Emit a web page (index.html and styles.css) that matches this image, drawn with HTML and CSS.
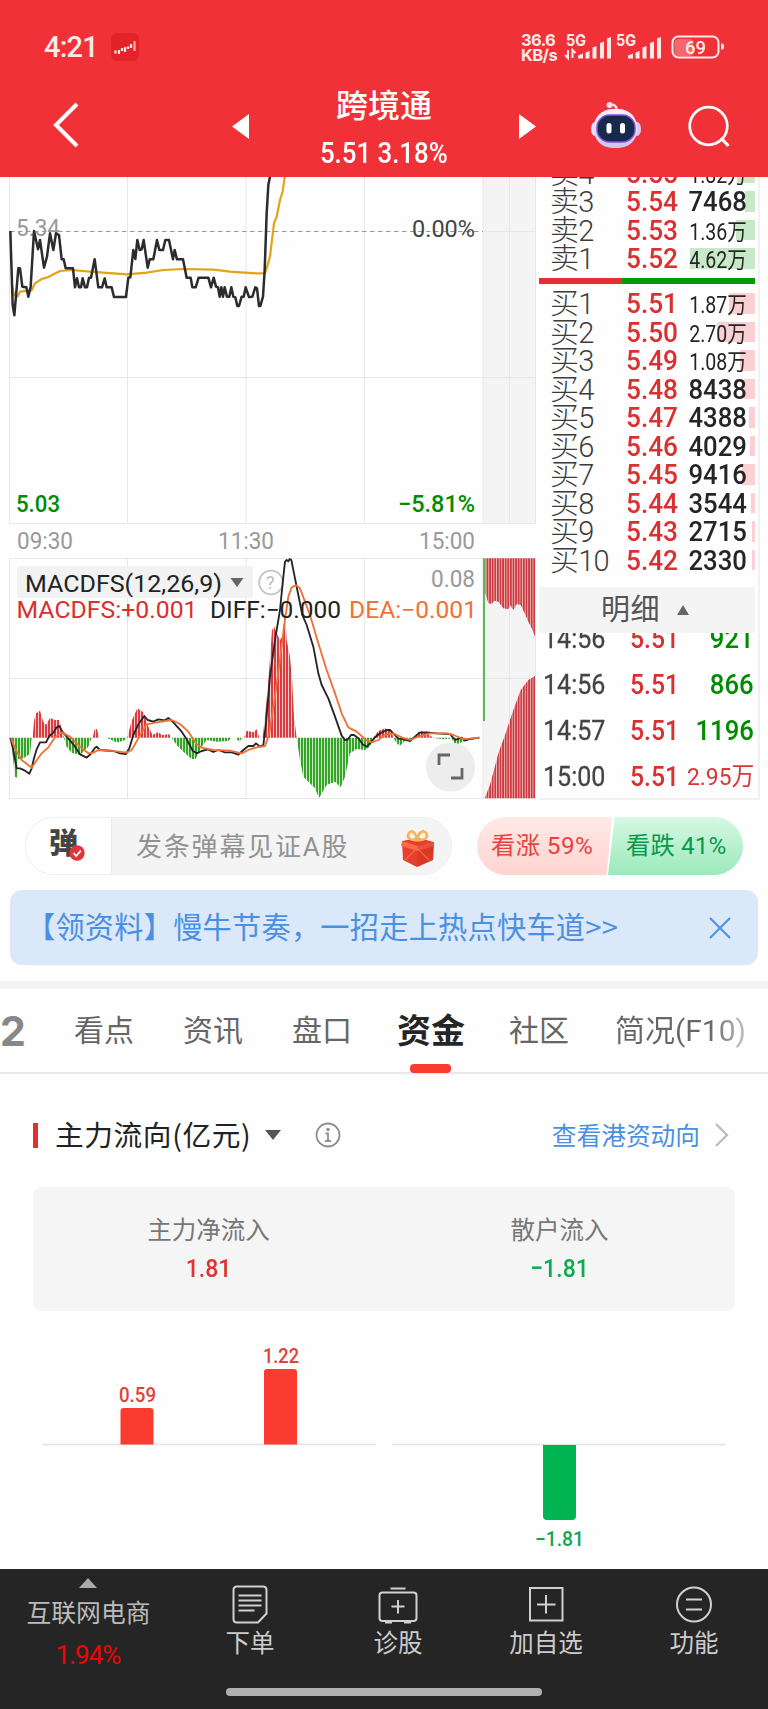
FILE: index.html
```html
<!DOCTYPE html>
<html lang="zh-CN">
<head>
<meta charset="utf-8">
<title>跨境通</title>
<link rel="stylesheet" href="styles.css">
</head>
<body>
<header class="header">
  <div class="status">
    <span class="clock">4:21</span>
    <svg class="app-icon" width="28" height="28" viewBox="0 0 28 28"><rect width="28" height="28" rx="6" fill="#e2242a"/><path d="M4.500 17.500v3M8 17v4M11 15v3M14 14v5M17 13.500v2.500M20 11v4" stroke="#fdeceb" stroke-width="2.200"/><path d="M23.500 8v10" stroke="#f3a29d" stroke-width="2.400"/></svg>
    <div class="speed"><span>36.6</span><span>KB/s</span></div>
    <svg class="signals" width="160" height="30" viewBox="0 0 160 30">
      <g fill="#fde9e9">
        <text x="2" y="14" class="net" textLength="20" lengthAdjust="spacingAndGlyphs">5G</text>
        <text x="52" y="14" class="net" textLength="20" lengthAdjust="spacingAndGlyphs">5G</text>
        <path d="M14 23.500l5-2v5h-5zM21.500 20.500l4-1.500v7.500h-4zM28.500 15.500l4-1.500v12.500h-4zM36 11l4-1.500v17h-4zM43 6.500l4-1.500v21.500h-4z"/>
        <path d="M64 23.500l5-2v5h-5zM71.500 20.500l4-1.500v7.500h-4zM78.500 15.500l4-1.500v12.500h-4zM86 11l4-1.500v17h-4zM93 6.500l4-1.500v21.500h-4z"/>
        <path d="M4 18v8l-3-3M8.500 26v-8l3 3" fill="none" stroke="#fde9e9" stroke-width="2"/>
        <rect x="110.500" y="7" width="19" height="17" rx="4" opacity=".3"/>
        <rect x="108.500" y="4.500" width="46" height="21" rx="6" fill="none" stroke="#fde9e9" stroke-width="2"/>
        <path d="M157 11.500h1a2 2 0 0 1 2 2v2a2 2 0 0 1-2 2h-1z"/>
        <text x="121" y="22" class="batt" textLength="21" lengthAdjust="spacingAndGlyphs">69</text>
      </g>
    </svg>
  </div>
  <div class="nav">
    <svg class="back" width="28" height="48" viewBox="0 0 28 48"><path d="M24 3 3 24l21 21" fill="none" stroke="#fff" stroke-width="4"/></svg>
    <svg class="prev" width="17" height="25" viewBox="0 0 17 25"><path d="M17 0v25L0 12.500z" fill="#fff"/></svg>
    <div class="title"><h1>跨境通</h1><p><span class="num">5.51 3.18%</span></p></div>
    <svg class="next" width="17" height="25" viewBox="0 0 17 25"><path d="M0 0v25l17-12.500z" fill="#fff"/></svg>
    <svg class="robot" width="52" height="48" viewBox="0 0 52 48">
      <defs><linearGradient id="shell" x1="0" y1="0" x2="0" y2="1"><stop offset="0" stop-color="#fff1f6"/><stop offset="1" stop-color="#c9c4f8"/></linearGradient></defs>
      <path d="M20 4c4-1 7 1 7 6" fill="none" stroke="#fbdce4" stroke-width="2.500"/><circle cx="19.500" cy="4" r="3" fill="#fbdce4"/>
      <ellipse cx="5" cy="28" rx="4" ry="7" fill="#e9e3fa"/><ellipse cx="47" cy="28" rx="4" ry="7" fill="#d7c9f7"/>
      <rect x="3.500" y="8" width="44" height="39" rx="19" fill="url(#shell)"/>
      <rect x="7" y="14" width="38" height="27" rx="12.500" fill="#18294b" stroke="#7c55db" stroke-width="1.500"/>
      <rect x="16.500" y="22" width="5" height="10.500" rx="2.500" fill="#fff"/><rect x="30" y="22" width="5" height="10.500" rx="2.500" fill="#fff"/>
    </svg>
    <svg class="search" width="42" height="44" viewBox="0 0 42 44"><circle cx="20.500" cy="21" r="18.800" fill="none" stroke="#fff" stroke-width="2.700"/><path d="m33 33 7.500 8" stroke="#fff" stroke-width="3.200"/></svg>
  </div>
</header>

<main>
<section class="market">
  <svg class="chart" width="539" height="623" viewBox="0 177 539 623">
    <defs>
      <pattern id="redBars" width="9" height="10" patternUnits="userSpaceOnUse"><rect width="9" height="10" fill="#fbdcdc"/><rect width="6.300" height="10" fill="#da3c42"/></pattern>
      <pattern id="greenBars" width="9" height="10" patternUnits="userSpaceOnUse"><rect width="9" height="10" fill="#dcf2d8"/><rect width="6.300" height="10" fill="#35a528"/></pattern>
      <pattern id="sideBars" width="7.800" height="10" patternUnits="userSpaceOnUse"><rect width="7.800" height="10" fill="#f5c6c6"/><rect width="5.400" height="10" fill="#cb3a40"/></pattern>
    </defs>
    <path d="M483 176h52v347h-52zM483 558h52v240h-52z" fill="#f4f4f4"/>
    <path d="M9.500 176v347.500h526V176M127.500 176v347M246 176v347M364.500 176v347M483 176v347M509.500 176v347M9.500 377.500h526M483 231.500h52M9.500 558.500h526v240H9.500zM127.500 558v240M246 558v240M364.500 558v240M483 558v240M509.500 558v240M9.500 678.500h526" fill="none" stroke="#e7e7e8"/>
    <path d="M10 231.500h473" stroke="#999" stroke-dasharray="4.500 3.500"/>
    <g class="axis">
      <text x="16" y="236" fill="#999" textLength="44" lengthAdjust="spacingAndGlyphs">5.34</text>
      <text x="412" y="236.500" fill="#444" textLength="63" lengthAdjust="spacingAndGlyphs">0.00%</text>
      <text class="strong" x="16" y="511.500" fill="#008c00" textLength="44" lengthAdjust="spacingAndGlyphs">5.03</text>
      <text class="strong" x="398" y="511.500" fill="#008c00" textLength="77" lengthAdjust="spacingAndGlyphs">−5.81%</text>
      <g fill="#999">
        <text x="17" y="549" textLength="56" lengthAdjust="spacingAndGlyphs">09:30</text>
        <text x="218" y="549" textLength="56" lengthAdjust="spacingAndGlyphs">11:30</text>
        <text x="419" y="549" textLength="56" lengthAdjust="spacingAndGlyphs">15:00</text>
        <text x="431" y="586.500" textLength="44" lengthAdjust="spacingAndGlyphs">0.08</text>
      </g>
    </g>
    <g transform="translate(0 170) scale(.33333)" fill="none" stroke-linejoin="round">
      <path stroke="#e2a414" stroke-width="6.500" d="M36 345 42 375 52 380 60 365 95 361 105 340 125 327 140 323 180 303 215 300 270 305 340 310 380 313 440 308 490 300 550 297 640 299 690 305 770 310 795 310 800 295 810 260 822 160 830 140 840 90 848 65 855 15"/>
      <path stroke="#2c2c2e" stroke-width="7.500" d="M31 183 38 405 43 436 55 295 60 295 67 350 79 352 85 380 92 350 102 183 114 238 120 210 132 293 141 260 150 190 160 240 168 190 177 195 185 268 191 268 197 295 219 295 225 352 231 325 237 352 243 352 248 325 255 352 261 352 267 323 273 323 284 268 295 352 306 352 314 325 320 352 335 352 342 381 378 381 385 323 391 322 400 240 406 267 412 210 419 240 425 238 431 210 443 293 449 268 460 268 471 210 478 240 489 240 496 210 507 210 519 268 524 240 531 268 549 268 560 323 572 323 577 352 587 352 596 323 625 323 633 352 641 323 648 350 654 352 659 380 664 352 669 380 674 352 681 380 688 380 694 352 700 380 706 382 712 408 717 408 725 380 731 380 737 352 747 381 757 380 766 352 771 355 777 408 781 408 789 380 794 300 800 130 805 45 811 15"/>
    </g>
    <rect x="17" y="566" width="236" height="32" rx="2" fill="#f2f2f3"/>
    <path d="M230.500 578h13L237 587z" fill="#666"/>
    <circle cx="271" cy="582.500" r="11.800" fill="none" stroke="#c4c4c4" stroke-width="1.800"/>
    <g transform="translate(0 550) scale(.33333)">
      <path fill="url(#greenBars)" d="M35 563 36 600 45 680 51 683 54 628 70 625 90 612 95 563zM192 563 200 590 215 608 240 615 265 590 275 563zM320 563 345 575 355 577 375 570 380 563zM515 563 530 585 550 605 575 627 587 627 605 590 620 570 650 575 685 573 695 563zM707 563 718 575 726 563z"/>
      <path fill="url(#redBars)" d="M98 563 102 512 108 490 120 482 130 515 138 525 150 503 165 510 178 510 186 545 192 563zM278 563 284 538 290 536 298 563zM382 563 395 512 412 475 430 487 445 530 458 555 475 546 485 555 508 553 512 563zM732 563 740 542 760 547 770 538 778 563z"/>
      <g transform="translate(750 0)">
        <path fill="url(#redBars)" d="M38 563 47 480 56 380 66 240 73 230 80 250 90 270 97 260 105 190 110 270 120 320 127 400 132 500 140 563zM370 563 385 543 405 535 425 545 430 563zM495 563 505 548 515 543 530 550 550 563z"/>
        <path fill="url(#greenBars)" d="M140 563 150 630 160 680 175 695 195 715 207 745 215 730 230 705 255 695 272 712 285 680 300 610 320 597 345 600 360 590 368 563zM430 563 440 580 450 587 465 572 480 570 490 563zM545 563 580 568 605 565 615 585 640 575 648 563z"/>
        <path fill="url(#sideBars)" d="M706 25V130L715 160 725 162 733 152 745 155 760 175 775 178 780 165 790 180 800 162 812 165 825 192 835 215 845 235 855 260V25zM704 745 720 705 745 610 765 555 790 480 812 420 835 390 855 378V745z"/>
        <path d="M702 25V513" stroke="#3fae38" stroke-width="5"/>
      </g>
      <g fill="none" stroke-width="5.500" stroke-linejoin="round">
        <path stroke="#252527" d="M31 563 40 600 50 655 60 655 75 662 88 671 95 655 102 625 110 598 120 577 138 577 148 558 160 548 170 532 178 528 187 545 200 560 220 583 240 613 260 623 272 612 285 593 290 590 300 600 340 603 360 610 378 612 388 595 400 555 415 523 433 498 443 510 460 515 475 508 495 511 505 504 520 517 545 545 560 568 578 602 590 610 605 603 625 598 640 606 655 600 675 607 695 607 715 614 730 600 745 588 760 588 768 580 780 590 790 585 798 520 810 380 825 270 840 180 848 100 855 35 860 30 865 34 869 27 874 30 882 70 892 120 907 195 920 225 940 290 955 370 965 405 985 445 1005 500 1025 557 1035 570 1043 569 1053 555 1062 555 1075 565 1088 583 1100 590 1110 580 1125 562 1140 550 1160 540 1170 540 1180 550 1195 566 1210 567 1230 573 1245 560 1258 548 1280 547 1310 550 1350 552 1365 570 1385 563 1395 572 1410 567 1438 563"/>
        <path stroke="#f07135" d="M33 565 45 595 65 630 95 653 105 638 125 610 145 592 165 562 185 547 210 560 240 590 265 610 280 608 295 600 330 602 380 608 395 600 415 565 440 523 470 517 515 510 540 522 565 545 590 583 605 593 640 600 690 602 725 610 745 600 770 592 795 588 808 550 825 440 840 330 852 230 865 140 875 112 888 106 900 115 915 155 930 195 955 280 980 360 1005 430 1025 490 1045 532 1070 545 1095 567 1115 577 1135 570 1155 555 1180 550 1205 562 1230 570 1260 558 1290 550 1340 550 1360 555 1390 567 1410 566 1438 563"/>
      </g>
    </g>
    <g class="axis">
      <text x="25" y="592" fill="#222" textLength="197" lengthAdjust="spacingAndGlyphs">MACDFS(12,26,9)</text>
      <text x="266" y="588.500" class="qmark" fill="#bbb">?</text>
      <text x="16.500" y="617.700" fill="#d8302f" textLength="181" lengthAdjust="spacingAndGlyphs">MACDFS:+0.001</text>
      <text x="210" y="617.700" fill="#222" textLength="131" lengthAdjust="spacingAndGlyphs">DIFF:−0.000</text>
      <text x="349" y="617.700" fill="#f07135" textLength="128" lengthAdjust="spacingAndGlyphs">DEA:−0.001</text>
    </g>
    <circle cx="450.500" cy="767" r="24.600" fill="#ececec" opacity=".95"/>
    <path d="M439 765v-10h11M462 768v10h-11" fill="none" stroke="#666" stroke-width="2.800"/>
  </svg>

  <div class="side">
    <div class="book">
      <div class="row sell"><i style="width:18px"></i><b>卖4</b><span class="price">5.55</span><span class="qty small">1.82万</span></div>
      <div class="row sell"><i style="width:10px"></i><b>卖3</b><span class="price">5.54</span><span class="qty">7468</span></div>
      <div class="row sell"><i style="width:19px"></i><b>卖2</b><span class="price">5.53</span><span class="qty small">1.36万</span></div>
      <div class="row sell"><i style="width:65px"></i><b>卖1</b><span class="price">5.52</span><span class="qty small">4.62万</span></div>
      <div class="ratio"></div>
      <div class="row"><i style="width:26px"></i><b>买1</b><span class="price">5.51</span><span class="qty small">1.87万</span></div>
      <div class="row"><i style="width:38px"></i><b>买2</b><span class="price">5.50</span><span class="qty small">2.70万</span></div>
      <div class="row"><i style="width:15px"></i><b>买3</b><span class="price">5.49</span><span class="qty small">1.08万</span></div>
      <div class="row"><i style="width:11px"></i><b>买4</b><span class="price">5.48</span><span class="qty">8438</span></div>
      <div class="row"><i style="width:6px"></i><b>买5</b><span class="price">5.47</span><span class="qty">4388</span></div>
      <div class="row"><i style="width:5px"></i><b>买6</b><span class="price">5.46</span><span class="qty">4029</span></div>
      <div class="row"><i style="width:13px"></i><b>买7</b><span class="price">5.45</span><span class="qty">9416</span></div>
      <div class="row"><i style="width:4px"></i><b>买8</b><span class="price">5.44</span><span class="qty">3544</span></div>
      <div class="row"><i style="width:3px"></i><b>买9</b><span class="price">5.43</span><span class="qty">2715</span></div>
      <div class="row"><i style="width:3px"></i><b>买10</b><span class="price">5.42</span><span class="qty">2330</span></div>
    </div>
    <div class="detail">明细<svg width="12" height="10" viewBox="0 0 12 10"><path d="M6 0l6 10H0z" fill="#666"/></svg></div>
    <div class="ticks">
      <div class="tick"><span class="time">14:56</span><span class="price">5.51</span><span class="qty down">921</span></div>
      <div class="tick"><span class="time">14:56</span><span class="price">5.51</span><span class="qty down">866</span></div>
      <div class="tick"><span class="time">14:57</span><span class="price">5.51</span><span class="qty down">1196</span></div>
      <div class="tick"><span class="time">15:00</span><span class="price">5.51</span><span class="qty small up">2.95万</span></div>
    </div>
  </div>
</section>

<section class="comment">
  <div class="input">
    <div class="dan">弹<svg width="16" height="16" viewBox="0 0 16 16"><circle cx="8" cy="8" r="7.700" fill="#e0353a"/><path d="m4.500 8 2.700 3 4.600-5.400" fill="none" stroke="#fff" stroke-width="1.800"/></svg></div>
    <div class="placeholder"><span>发条弹幕见证A股</span>
      <svg width="36" height="38" viewBox="0 0 36 38"><path d="M2 12 18 9l16 4-1 18-16 7L3 31z" fill="#e5402c"/><path d="m2 12 16 5 16-4v4l-16 5L1 17z" fill="#ff6a48"/><path d="m18 17-1 21 16-7 1-18z" fill="#c72c20" opacity=".4"/><path d="m5 31 12-12 12 12" fill="none" stroke="#f66b45" stroke-width="1.200"/><path d="M17 11C10 12 6 8 9 4s7 0 8 7c1-7 6-11 9-7s-1 8-9 7z" fill="none" stroke="#f5b455" stroke-width="2.600"/></svg>
    </div>
  </div>
  <div class="vote"><div class="rise">看涨 59%</div><div class="fall">看跌 41%</div></div>
</section>

<section class="banner"><span>【领资料】慢牛节奏，一招走上热点快车道&gt;&gt;</span><svg width="22" height="22" viewBox="0 0 22 22"><path d="m1 1 20 20M21 1 1 21" stroke="#4a90e2" stroke-width="2"/></svg></section>

<nav class="tabs">
  <span class="two">2</span><span>看点</span><span>资讯</span><span>盘口</span><span class="active">资金</span><span>社区</span><span class="fade">简况(F10)</span>
</nav>

<section class="flow">
  <div class="flow-head">
    <i class="mark"></i><h2>主力流向(亿元)</h2>
    <svg class="caret" width="16" height="10" viewBox="0 0 16 10"><path d="M0 0h16L8 10z" fill="#555"/></svg>
    <svg class="info" width="26" height="26" viewBox="0 0 26 26"><circle cx="13" cy="13" r="11.500" fill="none" stroke="#8e8e8e" stroke-width="1.800"/><circle cx="13" cy="7.500" r="1.700" fill="#8e8e8e"/><path d="M10.500 11.500H13V19m-3 0h6" fill="none" stroke="#8e8e8e" stroke-width="1.800"/></svg>
    <a class="link">查看港资动向</a>
    <svg class="more" width="14" height="24" viewBox="0 0 14 24"><path d="m1 1 11 11L1 23" fill="none" stroke="#bbb" stroke-width="2.200"/></svg>
  </div>
  <div class="summary">
    <div><p>主力净流入</p><strong class="up">1.81</strong></div>
    <div><p>散户流入</p><strong class="gain">−1.81</strong></div>
  </div>
  <svg class="bars" width="702" height="230" viewBox="33 1330 702 230">
    <path d="M42 1444.500h334M392 1444.500h334" stroke="#e4e4e4" stroke-width="1.500"/>
    <path d="M120.500 1444.500V1411q0-3 3-3h27q3 0 3 3v33.500zM264 1444.500V1372q0-3 3-3h27q3 0 3 3v72.500z" fill="#f93b30"/>
    <path d="M543 1445v71q0 4 4 4h25q4 0 4-4v-71z" fill="#00b451"/>
    <g fill="#e34038"><text x="119" y="1401.500" textLength="37" lengthAdjust="spacingAndGlyphs">0.59</text><text x="263" y="1363" textLength="36" lengthAdjust="spacingAndGlyphs">1.22</text></g>
    <text x="535" y="1546" fill="#12a551" textLength="49" lengthAdjust="spacingAndGlyphs">−1.81</text>
  </svg>
</section>
</main>

<footer class="footer">
  <div class="sector"><svg width="18" height="10" viewBox="0 0 18 10"><path d="M9 0l9 10H0z" fill="#aaa"/></svg><span>互联网电商</span><em>1.94%</em></div>
  <div class="item"><svg width="42" height="42" viewBox="0 0 42 42"><path d="M8 3.500h26q3.500 0 3.500 3.500v23.500L29 39.500H8Q4.500 39.500 4.500 36V7Q4.500 3.500 8 3.500zM9.500 12.500h23M9.500 17.500h23M9.500 22.500h23M9.500 27.500h16"/></svg>下单</div>
  <div class="item"><svg width="42" height="42" viewBox="0 0 42 42"><path d="M5.500 9.500h31q3 0 3 3V35q0 3-3 3h-31q-3 0-3-3V12.500q0-3 3-3zM13.500 5.500h15M21 17v13.500M14.500 23.500h13M8 39.500h7M27 39.500h7"/></svg>诊股</div>
  <div class="item"><svg width="42" height="42" viewBox="0 0 42 42"><path d="M5 5h32.500v32.500H5zM21 12v18.500M12 21.500h18.500"/></svg>加自选</div>
  <div class="item"><svg width="42" height="42" viewBox="0 0 42 42"><circle cx="21" cy="21.500" r="17"/><path d="M13 16.500h16M13 26.500h16"/></svg>功能</div>
  <div class="home"></div>
</footer>
</body>
</html>
```
FILE: styles.css
```css
* { box-sizing: border-box; }
body { margin: 0; width: 768px; height: 1709px; overflow: hidden; background: #fefefe; font-family: Roboto, "Noto Sans CJK SC", sans-serif; color: #333; display: flex; flex-direction: column; }
h1, h2, p { margin: 0; font-weight: 400; }
svg { display: block; flex: none; }

.header { height: 177px; background: #f03238; color: #fff; flex: none; }
.status { height: 90px; padding: 32px 0 0 44px; display: flex; align-items: flex-start; }
.clock { width: 67px; height: 30px; font: 500 29px/30px Roboto; letter-spacing: -.8px; color: #fdeaea; }
.app-icon { margin-top: 1px; }
.speed { margin-left: 382px; width: 43px; display: flex; flex-direction: column; font: 700 16.500px/14.500px Inter, sans-serif; letter-spacing: -.6px; color: #fde9e9; padding-top: 1px; }
.signals { overflow: visible; }
.net { font: 700 16px Inter, sans-serif; }
.batt { font: 500 19px Roboto; }
.nav { display: flex; height: 87px; padding-left: 53px; align-items: flex-start; }
.back { margin-top: 11px; }
.prev { margin: 24px 0 0 151px; }
.title { width: 270px; text-align: center; }
.title h1 { font: 500 32px/38px "Noto Sans CJK SC"; margin-top: -6px; }
.title p { margin-top: 13px; line-height: 36px; }
.num { display: inline-block; font-size: 29px; font-weight: 500; transform: scaleX(.89); white-space: nowrap; }
.next { margin-top: 24px; }
.robot { margin: 11px 0 0 54px; }
.search { margin: 15px 0 0 46px; }

main { flex: none; }
.market { height: 624px; display: flex; overflow: hidden; }
.axis text { font: 400 23.500px Roboto; }
.axis text.strong { font-weight: 500; }
.axis text.qmark { font-size: 18px; }
.side { width: 221px; border-right: 2px solid #f1f1f1; border-bottom: 2px solid #f1f1f1; height: 623px; overflow: hidden; }
.book { margin-top: -17.500px; width: 216px; height: 427.500px; }
.row { position: relative; height: 28.500px; display: grid; grid-template-columns: 78px 54px minmax(0, 1fr); align-items: center; padding-left: 11px; line-height: 28.500px; }
.row i { position: absolute; right: 0; top: 3px; height: 20.500px; background: #fbd0d3; }
.row.sell i { background: #c8e9c8; }
.row b { position: relative; font-size: 29px; font-weight: 300; color: #3c3c3c; letter-spacing: -.8px; white-space: nowrap; font-family: Roboto, "Noto Sans CJK SC"; }
.price { position: relative; color: #d93030; font-size: 28.500px; font-weight: 500; transform: scaleX(.92); transform-origin: 0 50%; justify-self: start; margin-left: -2px; }
.qty { position: relative; color: #252525; font-size: 28.500px; font-weight: 500; transform: scaleX(.9); transform-origin: 100% 50%; justify-self: end; margin-right: 8px; white-space: nowrap; }
.row .small { font-size: 23px; font-weight: 400; top: 2px; transform: scaleX(.85); }
.row .small, .tick .small { font-family: Roboto, "Noto Sans CJK SC"; }
.ratio { height: 6.500px; margin: 4px 0 6px; background: linear-gradient(90deg, #e42f34 83px, #009b08 83px); }
.detail { width: 216px; height: 46px; background: #f4f4f4; display: flex; align-items: center; gap: 17px; padding-left: 62px; font-size: 29px; color: #555; letter-spacing: .5px; line-height: 44px; }
.ticks { height: 165px; width: 216px; overflow: hidden; }
.tick { height: 46px; display: grid; grid-template-columns: 87px 46px minmax(0, 1fr); align-items: center; padding-left: 4px; line-height: 46px; }
.tick:first-child { margin-top: -17px; }
.time { font-size: 28.500px; font-weight: 400; -webkit-text-stroke: .3px #444; color: #444; transform: scaleX(.88); transform-origin: 0 50%; justify-self: start; }
.tick .price { transform: scaleX(.87); margin-left: 0; }
.tick .qty { margin-right: 1px; }
.tick .small { font-size: 24.500px; font-weight: 400; transform: scaleX(.93); }
.tick .down { color: #008c00; }
.tick .up, .up { color: #dd3434; }

.comment { display: flex; padding: 16px 25px 0; height: 89px; align-items: flex-start; justify-content: space-between; }
.input { width: 427px; height: 58px; display: flex; border: 1px solid #eee; border-radius: 29px; overflow: hidden; }
.dan { width: 86px; padding-left: 23px; font: 900 29px/47px "Noto Sans CJK SC"; color: #444; background: #fff; border-right: 1px solid #eaeaea; display: flex; }
.dan svg { margin: 27px 0 0 -9px; }
.placeholder { flex: 1; background: #f4f4f4; display: flex; justify-content: space-between; align-items: center; padding: 4px 15px 0 24px; color: #929292; font-size: 26px; letter-spacing: 1.800px; white-space: nowrap; }
.placeholder span { margin-top: -7px; }
.vote { width: 266px; height: 58px; border-radius: 29px; overflow: hidden; display: flex; font-size: 24.300px; line-height: 58px; white-space: nowrap; }
.rise { width: 136px; padding-left: 14px; color: #e8423e; background: linear-gradient(#ffe9e7, #ffd4d1); clip-path: polygon(0 0, 100% 0, 96% 100%, 0 100%); letter-spacing: .4px; }
.fall { width: 136px; margin-left: -4px; padding-left: 18px; color: #08994c; background: linear-gradient(#d6f8e3, #9be9bb); clip-path: polygon(5% 0, 100% 0, 100% 100%, 0 100%); letter-spacing: .1px; }
.banner { margin: 0 10px; height: 75px; border-radius: 12px; background: #dae8fa; display: flex; align-items: center; justify-content: space-between; padding: 0 27px 0 16px; font: 400 29.200px/75px "Noto Sans CJK SC"; letter-spacing: .25px; color: #4a90e2; }
.banner span { white-space: nowrap; margin-top: -5px; }

.tabs { margin-top: 16px; height: 93px; border-top: 8px solid #f3f4f6; border-bottom: 2px solid #e8e8e8; display: flex; align-items: center; font-size: 30px; line-height: 84px; color: #666; white-space: nowrap; }
.tabs span { width: 60px; margin-right: 49px; padding-top: 1px; }
.tabs .two { width: 26px; margin-right: 48px; font: 700 41px/84px Inter; color: #888; }
.tabs span:nth-child(4) { margin-right: 45px; }
.tabs .active { position: relative; width: 68px; margin-right: 44px; font-size: 34px; font-weight: 700; color: #252525; }
.tabs .active::after { content: ""; position: absolute; left: 13px; bottom: 0; width: 41px; height: 9px; border-radius: 4px; background: #f93b30; }
.tabs .fade { width: 135px; margin: 0 0 0 -2px; background: linear-gradient(90deg, #666 70%, #ccc); -webkit-background-clip: text; color: transparent; }
.tabs span:nth-child(6) { margin-right: 48px; }

.flow { padding: 0 33px; }
.flow-head { height: 113px; padding-top: 9px; display: flex; align-items: center; }
.mark { width: 5px; height: 25px; background: #e3302f; margin-right: 17px; }
.flow-head h2 { width: 194px; font: 400 28.700px/40px "Noto Sans CJK SC"; letter-spacing: .6px; color: #222; white-space: nowrap; margin-top: -2px; }
.caret { margin-left: 16px; }
.info { margin-left: 34px; }
.link { margin: -3px 15px 0 auto; font: 400 24.700px/36px "Noto Sans CJK SC"; color: #4a90e2; }
.more { margin-right: 6px; }
.summary { height: 124px; border-radius: 9px; background: #f5f5f5; display: flex; text-align: center; padding-top: 26px; }
.summary div { flex: 1; }
.summary p { font-size: 24.500px; line-height: 36px; color: #777; }
.summary strong { display: block; font-size: 26.500px; font-weight: 500; line-height: 40px; margin-top: -1px; transform: scaleX(.87); }
.gain { color: #0cad50; }
.bars { margin-top: 19px; }
.bars text { font: 500 20.500px Roboto; }

.footer { margin-top: auto; height: 140px; background: #252525; color: #ccc; position: relative; display: flex; flex: none; font-size: 24.500px; }
.sector { width: 176px; display: flex; flex-direction: column; align-items: center; padding-top: 9px; line-height: 36px; }
.sector span { margin-top: 8px; margin-left: 1px; color: #bbb; white-space: nowrap; font-size: 24.800px; }
.sector em { font-style: normal; color: #ee0606; margin-top: 5px; font-size: 26px; letter-spacing: -1px; }
.item { width: 148px; display: flex; flex-direction: column; align-items: center; padding-top: 14px; line-height: 38px; }
.item svg { fill: none; stroke: #d0d0d0; stroke-width: 2; }
.home { position: absolute; left: 226px; top: 119px; width: 316px; height: 8px; border-radius: 4px; background: #b0b0b0; }
```
